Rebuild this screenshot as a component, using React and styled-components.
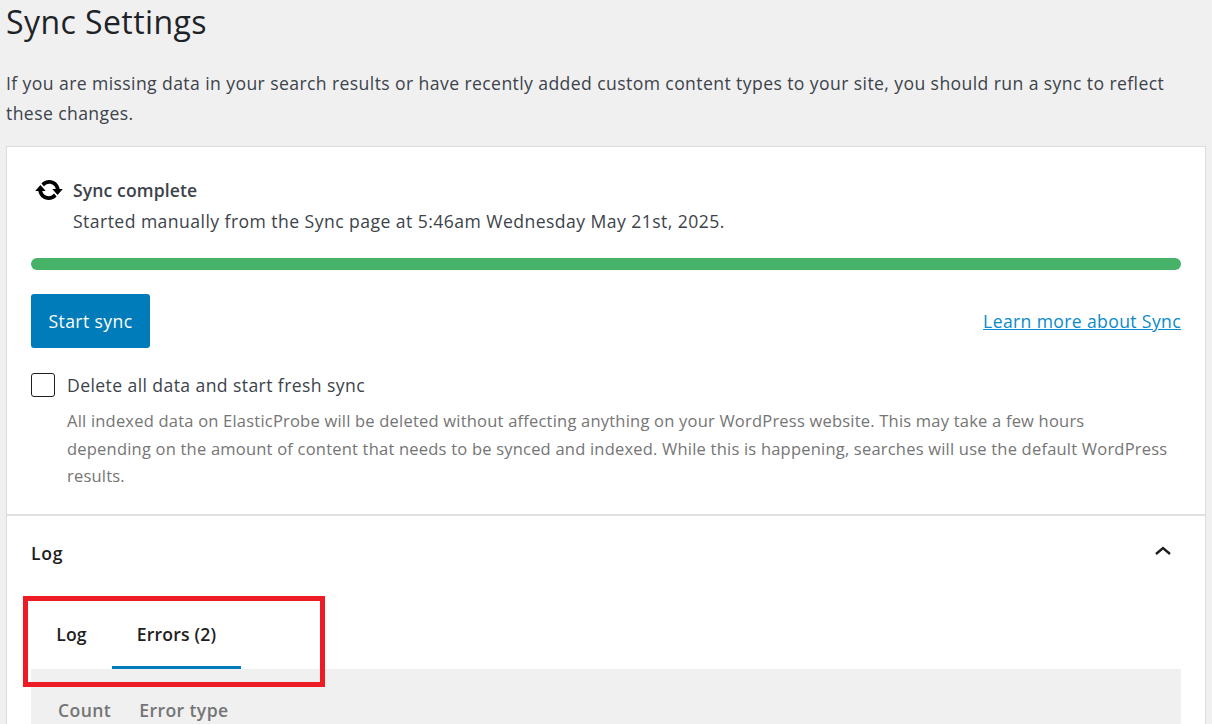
import React from 'react'
import styled, { createGlobalStyle } from 'styled-components'

const GlobalStyle = createGlobalStyle`
  html, body {
    margin: 0;
    height: 724px;
    overflow: hidden;
    background: #f0f0f1;
  }
  body {
    font-family: "Open Sans", "Noto Sans", sans-serif;
    color: #3c434a;
  }
`

const Page = styled.div`
  padding: 0 6px;
  height: 724px;
  overflow: hidden;
`

const Title = styled.h1`
  margin: 0;
  padding-top: 1px;
  height: 44px;
  box-sizing: border-box;
  font-size: 32px;
  font-weight: 400;
  line-height: 42px;
  letter-spacing: 0.42px;
  color: #1d2327;
`

const Intro = styled.p`
  margin: 0;
  padding-top: 24px;
  height: 102px;
  box-sizing: border-box;
  font-size: 17.6px;
  line-height: 30px;
  letter-spacing: 0.4px;
  color: #3c434a;
  width: 1180px;
`

const Card = styled.section`
  background: #fff;
  border: 1px solid #dcdcde;
  height: 700px;
`

const SyncPanel = styled.div`
  padding: 28px 24px 24px;
  height: 369px;
  box-sizing: border-box;
  border-bottom: 2px solid #e0e0e0;
`

const Status = styled.div`
  display: flex;
  gap: 9px;
`

const StatusIcon = styled.svg`
  width: 30px;
  height: 30px;
  margin-left: 3px;
  fill: #000;
  flex: none;
`

const StatusText = styled.div`
  font-size: 17.6px;
  line-height: 31px;
  letter-spacing: 0.44px;
`

const StatusTitle = styled.div`
  font-weight: 600;
  letter-spacing: 0.1px;
`

const Progress = styled.div`
  height: 12px;
  border-radius: 6px;
  background: #46b267;
  margin-top: 21px;
`

const Actions = styled.div`
  display: flex;
  align-items: center;
  justify-content: space-between;
  margin-top: 24px;
`

const StartButton = styled.button`
  width: 119px;
  height: 54px;
  padding: 0;
  border: 0;
  border-radius: 3px;
  background: #007cba;
  color: #fff;
  font: inherit;
  font-size: 17.6px;
  letter-spacing: 0.4px;
`

const LearnLink = styled.a`
  font-size: 17.6px;
  letter-spacing: 0.36px;
  color: #0a8ac9;
  text-decoration: underline;
`

const CheckRow = styled.label`
  display: flex;
  align-items: center;
  gap: 12px;
  margin-top: 24px;
  font-size: 17.6px;
  line-height: 26px;
  letter-spacing: 0.4px;
`

const CheckBox = styled.span`
  width: 22px;
  height: 22px;
  border: 1px solid #1e1e1e;
  border-radius: 3px;
  background: #fff;
  flex: none;
`

const Help = styled.p`
  margin: 9px 10px 0 36px;
  font-size: 16.5px;
  line-height: 27.5px;
  letter-spacing: 0.21px;
  color: #757575;
`

const LogPanel = styled.div`
  padding: 0 24px;
`

const LogHeader = styled.div`
  display: flex;
  align-items: center;
  justify-content: space-between;
  height: 74px;
  font-size: 17.6px;
  font-weight: 600;
  letter-spacing: 0.7px;
  color: #1e1e1e;
`

const Chevron = styled.svg`
  width: 24px;
  height: 24px;
  margin: -4px 6px 0 0;
  fill: none;
  stroke: #1e1e1e;
  stroke-width: 2.4;
`

const Tabs = styled.div`
  display: flex;
  margin-top: 5px;
  height: 74px;
`

const Tab = styled.div`
  display: flex;
  align-items: center;
  justify-content: center;
  width: ${p => p.$width}px;
  height: 68px;
  margin-top: 6px;
  box-sizing: border-box;
  font-size: 17.6px;
  font-weight: 600;
  letter-spacing: 0.2px;
  color: #1e1e1e;
  border-bottom: 3px solid ${p => (p.$active ? '#007cba' : 'transparent')};
`

const ErrorsTable = styled.div`
  display: flex;
  gap: 28px;
  background: #f0f0f1;
  height: 80px;
  padding: 29px 27px 0;
  box-sizing: border-box;
  font-size: 17.6px;
  font-weight: 600;
  line-height: 24px;
  letter-spacing: 0.4px;
  color: #757575;
`

const Highlight = styled.div`
  position: absolute;
  left: 23px;
  top: 596px;
  width: 302px;
  height: 91px;
  box-sizing: border-box;
  border: 5px solid #ed1c24;
  pointer-events: none;
`

export default function App() {
  return (
    <Page>
      <GlobalStyle />
      <Title>Sync Settings</Title>
      <Intro>
        If you are missing data in your search results or have recently added custom content types to your site, you
        should run a sync to reflect these changes.
      </Intro>
      <Card>
        <SyncPanel>
          <Status>
            <StatusIcon viewBox="0 0 20 20">
              <path d="M10.2 3.28c3.53 0 6.43 2.61 6.92 6h2.08l-3.5 4-3.5-4h2.32c-.45-1.97-2.21-3.45-4.32-3.45-1.45 0-2.73.71-3.54 1.78L4.95 5.66C6.23 4.2 8.11 3.28 10.2 3.28zm-.4 13.44c-3.52 0-6.43-2.61-6.92-6H.8l3.5-4c1.17 1.33 2.33 2.67 3.5 4H5.48c.45 1.97 2.21 3.45 4.32 3.45 1.45 0 2.73-.71 3.54-1.78l1.71 1.95c-1.28 1.46-3.15 2.38-5.25 2.38z" />
            </StatusIcon>
            <StatusText>
              <StatusTitle>Sync complete</StatusTitle>
              <div>Started manually from the Sync page at 5:46am Wednesday May 21st, 2025.</div>
            </StatusText>
          </Status>
          <Progress />
          <Actions>
            <StartButton>Start sync</StartButton>
            <LearnLink href="#">Learn more about Sync</LearnLink>
          </Actions>
          <CheckRow>
            <CheckBox />
            Delete all data and start fresh sync
          </CheckRow>
          <Help>
            All indexed data on ElasticProbe will be deleted without affecting anything on your WordPress website. This
            may take a few hours depending on the amount of content that needs to be synced and indexed. While this is
            happening, searches will use the default WordPress results.
          </Help>
        </SyncPanel>
        <LogPanel>
          <LogHeader>
            Log
            <Chevron viewBox="0 0 24 24">
              <path d="M5 15l7-6 7 6" />
            </Chevron>
          </LogHeader>
          <Tabs>
            <Tab $width={81}>Log</Tab>
            <Tab $width={129} $active>
              Errors (2)
            </Tab>
          </Tabs>
          <ErrorsTable>
            <span>Count</span>
            <span>Error type</span>
          </ErrorsTable>
        </LogPanel>
      </Card>
      <Highlight />
    </Page>
  )
}
